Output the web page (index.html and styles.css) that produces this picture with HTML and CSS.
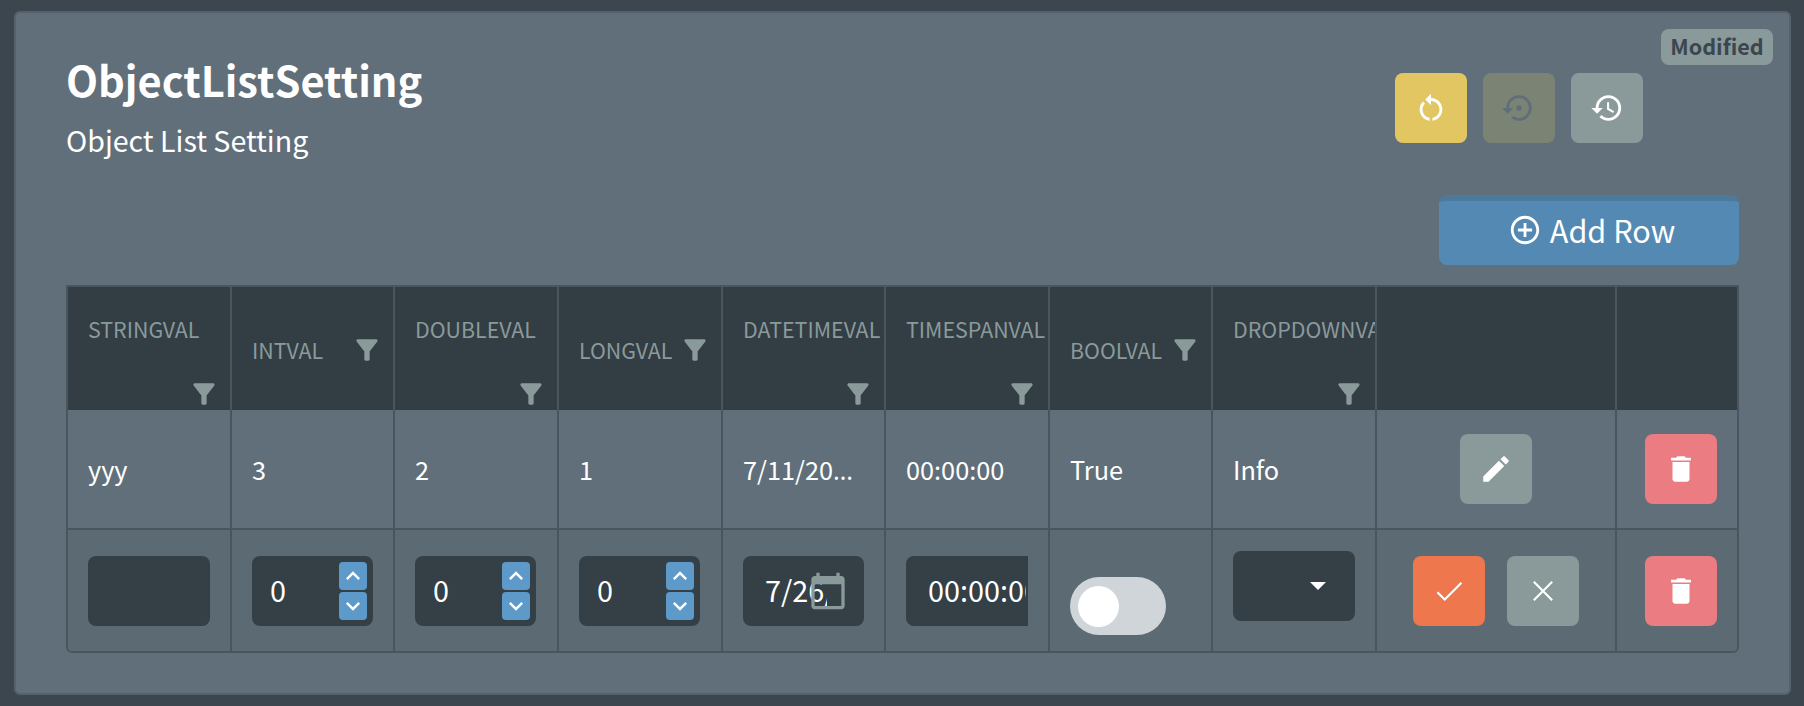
FILE: index.html
```html
<!DOCTYPE html>
<html lang="en">
<head>
  <meta charset="UTF-8" />
  <title>ObjectListSetting</title>
  <link rel="stylesheet" href="styles.css">
</head>
<body>
  <section class="panel">
    <span class="badge">Modified</span>

    <header class="panel-head">
      <div class="titles">
        <h1>ObjectListSetting</h1>
        <p>Object List Setting</p>
      </div>
      <div class="actions">
        <button class="btn btn-yellow"><svg viewBox="0 0 24 24"><path d="M12 5V2L8 6l4 4V7c3.31 0 6 2.69 6 6 0 2.97-2.17 5.43-5 5.91v2.02c3.95-.49 7-3.85 7-7.93 0-4.42-3.58-8-8-8zm-6 8c0-1.65.67-3.15 1.76-4.24L6.34 7.34C4.9 8.79 4 10.79 4 13c0 4.08 3.05 7.44 7 7.93v-2.02c-2.83-.48-5-2.94-5-5.91z"/></svg></button>
        <button class="btn btn-disabled"><svg viewBox="0 0 24 24"><path d="M14 12c0-1.1-.9-2-2-2s-2 .9-2 2 .9 2 2 2 2-.9 2-2zm-2-9c-4.97 0-9 4.03-9 9H0l4 4 4-4H5c0-3.87 3.13-7 7-7s7 3.13 7 7-3.13 7-7 7c-1.51 0-2.91-.49-4.06-1.3l-1.42 1.44C8.04 20.3 9.94 21 12 21c4.97 0 9-4.03 9-9s-4.03-9-9-9z"/></svg></button>
        <button class="btn btn-grey"><svg viewBox="0 0 24 24"><path d="M13 3c-4.97 0-9 4.03-9 9H1l3.89 3.89.07.14L9 12H6c0-3.87 3.13-7 7-7s7 3.13 7 7-3.13 7-7 7c-1.93 0-3.68-.79-4.94-2.06l-1.42 1.42C8.27 19.99 10.51 21 13 21c4.97 0 9-4.03 9-9s-4.03-9-9-9zm-1 5v5l4.28 2.54.72-1.21-3.5-2.08V8H12z"/></svg></button>
      </div>
    </header>

    <div class="toolbar">
      <button class="add-row">
        <svg viewBox="0 0 24 24"><path d="M13 7h-2v4H7v2h4v4h2v-4h4v-2h-4V7zm-1-5C6.48 2 2 6.48 2 12s4.48 10 10 10 10-4.48 10-10S17.52 2 12 2zm0 18c-4.41 0-8-3.59-8-8s3.59-8 8-8 8 3.59 8 8-3.59 8-8 8z"/></svg>
        Add Row
      </button>
    </div>

    <div class="table-wrap">
      <table>
        <colgroup>
          <col class="c1"><col class="c2"><col class="c3"><col class="c4"><col class="c5">
          <col class="c6"><col class="c7"><col class="c8"><col class="c9"><col class="c10">
        </colgroup>
        <thead>
          <tr>
            <th><div class="col-head stacked"><span>StringVal</span><svg viewBox="0 0 24 24"><use href="#funnel"/></svg></div></th>
            <th><div class="col-head"><span>IntVal</span><svg viewBox="0 0 24 24"><use href="#funnel"/></svg></div></th>
            <th><div class="col-head stacked"><span>DoubleVal</span><svg viewBox="0 0 24 24"><use href="#funnel"/></svg></div></th>
            <th><div class="col-head"><span>LongVal</span><svg viewBox="0 0 24 24"><use href="#funnel"/></svg></div></th>
            <th><div class="col-head stacked"><span>DateTimeVal</span><svg viewBox="0 0 24 24"><use href="#funnel"/></svg></div></th>
            <th><div class="col-head stacked"><span>TimeSpanVal</span><svg viewBox="0 0 24 24"><use href="#funnel"/></svg></div></th>
            <th><div class="col-head"><span>BoolVal</span><svg viewBox="0 0 24 24"><use href="#funnel"/></svg></div></th>
            <th><div class="col-head stacked"><span>DropdownVal</span><svg viewBox="0 0 24 24"><use href="#funnel"/></svg></div></th>
            <th></th>
            <th></th>
          </tr>
        </thead>
        <tbody>
          <tr class="row-view">
            <td>yyy</td>
            <td>3</td>
            <td>2</td>
            <td>1</td>
            <td><div class="clip"><span>7/11/2024, 12:00 AM</span></div></td>
            <td>00:00:00</td>
            <td>True</td>
            <td>Info</td>
            <td class="center">
              <button class="btn btn-grey"><svg viewBox="0 0 24 24"><use href="#pencil"/></svg></button>
            </td>
            <td class="end">
              <button class="btn btn-red"><svg viewBox="0 0 24 24"><use href="#trash"/></svg></button>
            </td>
          </tr>
          <tr class="row-edit">
            <td><input class="field" type="text"></td>
            <td>
              <div class="number">
                <input class="field" type="text" value="0">
                <div class="spin">
                  <button><svg viewBox="0 0 24 24"><use href="#chev-up"/></svg></button>
                  <button><svg viewBox="0 0 24 24"><use href="#chev-down"/></svg></button>
                </div>
              </div>
            </td>
            <td>
              <div class="number">
                <input class="field" type="text" value="0">
                <div class="spin">
                  <button><svg viewBox="0 0 24 24"><use href="#chev-up"/></svg></button>
                  <button><svg viewBox="0 0 24 24"><use href="#chev-down"/></svg></button>
                </div>
              </div>
            </td>
            <td>
              <div class="number">
                <input class="field" type="text" value="0">
                <div class="spin">
                  <button><svg viewBox="0 0 24 24"><use href="#chev-up"/></svg></button>
                  <button><svg viewBox="0 0 24 24"><use href="#chev-down"/></svg></button>
                </div>
              </div>
            </td>
            <td>
              <div class="date">
                <input class="field" type="text" value="7/26/2024, 12:00 AM">
                <svg viewBox="0 0 24 24"><path d="M20 3h-1V1h-2v2H7V1H5v2H4c-1.1 0-2 .9-2 2v16c0 1.1.9 2 2 2h16c1.1 0 2-.9 2-2V5c0-1.1-.9-2-2-2zm0 18H4V8h16v13z"/></svg>
              </div>
            </td>
            <td><input class="field field-time" type="text" value="00:00:00"></td>
            <td><div class="toggle"><span class="knob"></span></div></td>
            <td><div class="select"><span class="caret"></span></div></td>
            <td class="center">
              <div class="pair">
                <button class="btn btn-orange"><svg viewBox="0 0 24 24"><polyline class="thin" points="3.8,12.8 9,18 20.8,6.2"/></svg></button>
                <button class="btn btn-grey"><svg viewBox="0 0 24 24"><path class="thin" d="M5.5 5.5l13 13M18.5 5.5l-13 13"/></svg></button>
              </div>
            </td>
            <td class="end">
              <button class="btn btn-red"><svg viewBox="0 0 24 24"><use href="#trash"/></svg></button>
            </td>
          </tr>
        </tbody>
      </table>
    </div>
  </section>

  <svg class="defs">
    <defs>
      <path id="funnel" d="M4.25 5.61C6.27 8.2 10 13 10 13v6c0 .55.45 1 1 1h2c.55 0 1-.45 1-1v-6s3.72-4.8 5.74-7.39C20.25 4.95 19.78 4 18.95 4H5.04c-.83 0-1.3.95-.79 1.61z"/>
      <path id="pencil" d="M3 17.25V21h3.75L17.81 9.94l-3.75-3.75L3 17.25zM20.71 7.04c.39-.39.39-1.02 0-1.41l-2.34-2.34c-.39-.39-1.02-.39-1.41 0l-1.83 1.83 3.75 3.75 1.83-1.83z"/>
      <path id="trash" d="M6 19c0 1.1.9 2 2 2h8c1.1 0 2-.9 2-2V7H6v12zM19 4h-3.5l-1-1h-5l-1 1H5v2h14V4z"/>
      <path id="chev-up" d="M12 8l-6 6 1.41 1.41L12 10.83l4.59 4.58L18 14z"/>
      <path id="chev-down" d="M16.59 8.59L12 13.17 7.41 8.59 6 10l6 6 6-6z"/>
    </defs>
  </svg>
</body>
</html>
```

FILE: styles.css
```css
* {
  box-sizing: border-box;
  margin: 0;
  padding: 0;
}

html, body {
  height: 100%;
  overflow: hidden;
}

body {
  font-family: "Noto Sans CJK KR", "Noto Sans", sans-serif;
  background: #3b464e;
  color: #fff;
  padding: 11px 13px 11px 14px;
}

svg {
  display: block;
  fill: currentColor;
}

.defs {
  width: 0;
  height: 0;
  position: absolute;
}

button {
  border: none;
  font-family: inherit;
  color: #fff;
}

/* Panel */
.panel {
  position: relative;
  height: 684px;
  background: #616f7a;
  border: 2px solid #55626d;
  border-radius: 6px;
  padding: 0 50px;
}

.badge {
  position: absolute;
  top: 16px;
  right: 16px;
  width: 112px;
  height: 36px;
  border-radius: 8px;
  background: #8a9a9b;
  color: #3b464e;
  font-size: 21.6px;
  font-weight: 700;
  line-height: 33px;
  text-align: center;
}

.panel-head {
  display: flex;
  justify-content: space-between;
  height: 182px;
}

.titles h1 {
  font-size: 41.6px;
  font-weight: 700;
  line-height: 60px;
  margin-top: 36px;
}

.titles p {
  font-size: 28.6px;
  line-height: 40px;
  margin-top: 11px;
}

.actions {
  display: flex;
  gap: 16px;
  padding: 60px 96px 0 0;
}

.btn {
  display: flex;
  align-items: center;
  justify-content: center;
  width: 72px;
  height: 70px;
  border-radius: 8px;
}

.btn svg {
  width: 34px;
  height: 34px;
}

.btn-yellow { background: #e2c661; }
.btn-disabled { background: #7b8375; color: #606e79; }
.btn-grey { background: #8a9a9b; }
.btn-red { background: #ea7c82; }
.btn-orange { background: #ee774e; }

.thin {
  fill: none;
  stroke: currentColor;
  stroke-width: 1.5;
}

.toolbar {
  display: flex;
  justify-content: flex-end;
  margin-bottom: 20px;
}

.add-row {
  display: flex;
  align-items: center;
  justify-content: center;
  gap: 8px;
  width: 300px;
  height: 70px;
  padding: 0 0 6px 5px;
  background: #5389b3;
  border-top: 6px solid #4c7a9d;
  border-radius: 8px;
  font-size: 30.6px;
}

.add-row svg {
  width: 34px;
  height: 34px;
}

/* Table */
.table-wrap {
  border: 2px solid #4a565f;
  border-radius: 0 0 6px 6px;
  overflow: hidden;
}

table {
  width: 1669px;
  table-layout: fixed;
  border-collapse: separate;
  border-spacing: 0;
}

.c1, .c3, .c4, .c6, .c8 { width: 164px; }
.c2, .c5, .c7 { width: 163px; }
.c9 { width: 240px; }
.c10 { width: 120px; }

th {
  height: 123px;
  padding: 0;
  background: #333d44;
  border-right: 2px solid #4a565f;
  overflow: hidden;
}

th:last-child, td:last-child {
  border-right: none;
}

.col-head {
  display: flex;
  align-items: center;
  justify-content: space-between;
  height: 123px;
  padding: 2px 11px 0 20px;
  color: #8a9a9b;
  font-size: 21.4px;
  font-weight: 400;
  text-align: left;
  text-transform: uppercase;
  white-space: nowrap;
}

.col-head svg {
  flex: none;
  width: 32px;
  height: 32px;
  margin-right: -1px;
}

.col-head.stacked {
  flex-direction: column;
  align-items: stretch;
  padding: 26px 11px 0 20px;
}

.col-head.stacked span {
  line-height: 32px;
}

.col-head.stacked svg {
  align-self: flex-end;
  margin-top: 1px;
}

td {
  padding: 0 0 0 20px;
  border-right: 2px solid #4a565f;
  font-size: 25.3px;
}

.row-view td {
  height: 120px;
  border-bottom: 2px solid #4a565f;
}

.row-edit td {
  height: 121px;
  background: #5c6a74;
}

td.center {
  padding: 0;
}

td.center > .btn {
  margin: 0 auto;
}

td.end {
  padding: 0 0 0 28px;
}

.pair {
  display: flex;
  justify-content: center;
  gap: 22px;
}

/* the ellipsis takes the block's font, the CJK one centres its dots */
.clip {
  overflow: hidden;
  text-overflow: ellipsis;
  white-space: nowrap;
  padding-right: 21px;
  font-family: "Noto Sans", sans-serif;
}

.clip span {
  font-family: "Noto Sans CJK KR", "Noto Sans", sans-serif;
}

/* Edit row fields */
.field {
  display: block;
  width: 122px;
  height: 70px;
  padding: 0 18px 3px;
  background: #353f46;
  border: none;
  border-radius: 8px;
  color: #fff;
  font-family: inherit;
  font-size: 28.8px;
  outline: none;
}

.number {
  position: relative;
  width: 121px;
}

.number .field {
  width: 100%;
}

.spin {
  position: absolute;
  top: 6px;
  right: 6px;
  display: flex;
  flex-direction: column;
  gap: 2px;
}

.spin button {
  width: 28px;
  height: 28px;
  background: #5e9ac9;
  border-radius: 4px;
}

.spin svg {
  width: 28px;
  height: 28px;
}

.date {
  position: relative;
  width: 121px;
}

.date .field {
  width: 100%;
  padding: 0 37px 3px 22px;
}

.date svg {
  position: absolute;
  top: 15px;
  right: 16px;
  width: 40px;
  height: 40px;
  color: #8a9a9b;
}

.field-time {
  padding: 0 2px 3px 22px;
  border-radius: 8px 0 0 8px;
}

.toggle {
  display: flex;
  align-items: center;
  width: 96px;
  height: 58px;
  margin-top: 31px;
  padding-left: 8px;
  background: #d0d5d9;
  border-radius: 29px;
}

.knob {
  width: 41px;
  height: 41px;
  background: #fff;
  border-radius: 50%;
}

.select {
  display: flex;
  align-items: center;
  justify-content: flex-end;
  width: 122px;
  height: 70px;
  margin-bottom: 10px;
  padding-right: 29px;
  background: #353f46;
  border-radius: 8px;
}

.caret {
  border-left: 8px solid transparent;
  border-right: 8px solid transparent;
  border-top: 8px solid #fff;
}
```
